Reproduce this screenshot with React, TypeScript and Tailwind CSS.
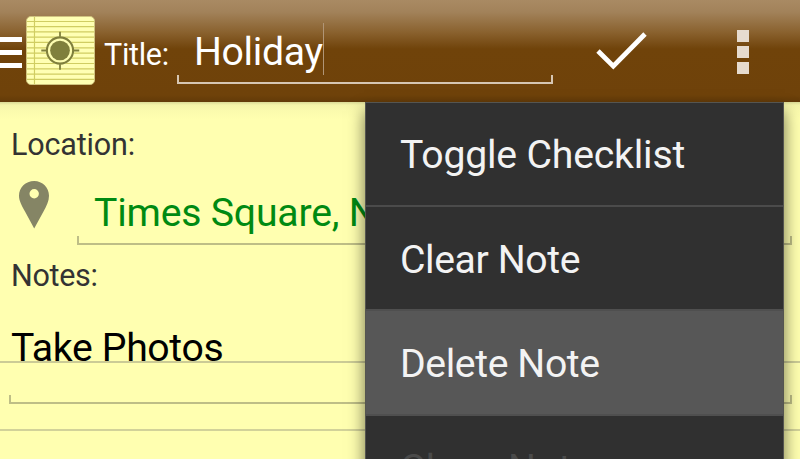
import type { ReactNode } from 'react';

function Field({ className, light, children }: { className: string; light?: boolean; children?: ReactNode }) {
  const line = light ? 'bg-[#d6c6b3]' : 'bg-[#bebe86]';
  return (
    <div className={`flex flex-col justify-end ${className}`}>
      {children}
      <div className="flex shrink-0 justify-between">
        <div className={`h-[7px] w-[2px] ${line}`} />
        <div className={`h-[7px] w-[2px] ${line}`} />
      </div>
      <div className={`h-[2px] shrink-0 ${line}`} />
    </div>
  );
}

function NoteIcon() {
  return (
    <svg className="ml-[4px] h-[69px] w-[69px] shrink-0" viewBox="0 0 70 70">
      <rect x="0.5" y="0.5" width="69" height="69" rx="4.5" fill="#ffffb3" stroke="#cfc37f" />
      <g stroke="#d0cd62" strokeWidth="1.2">
        {[5.6, 10.7, 16.1, 21.4, 26.8, 32.3, 37.6, 42.8, 48.2, 53.6, 59, 64.3].map((y) => (
          <line key={y} x1="1" x2="69" y1={y} y2={y} />
        ))}
        <line x1="8.6" x2="8.6" y1="1" y2="69" />
      </g>
      <circle cx="34.5" cy="35" r="14.4" fill="#fdfdb2" />
      <circle cx="34.5" cy="35" r="13.3" fill="none" stroke="#7f7f3c" strokeWidth="2.1" />
      <circle cx="34.5" cy="35" r="10" fill="#7f7f3c" />
      <path d="M34.500 16v5M34.500 49v5.500M15.500 35h5M48.500 35h5.500" stroke="#7f7f3c" strokeWidth="1.8" />
    </svg>
  );
}

const items = [
  { label: 'Toggle Checklist', row: 'h-[104px] border-b-2 border-[#4b4b4b] pt-[2px]', text: 'text-[#f3f3f3] tracking-[-0.2px]' },
  { label: 'Clear Note', row: 'h-[102px] pt-[4px]', text: 'text-[#f3f3f3] tracking-[-0.4px]' },
  { label: 'Delete Note', row: 'h-[107px] border-y-2 border-[#4f4f4f] bg-[#575757] pt-[2px]', text: 'text-[#f3f3f3] tracking-[-0.4px]' },
  { label: 'Close Note', row: 'h-[105px]', text: 'text-[#4a4a4a]' },
];

export default function App() {
  return (
    <div className="relative flex h-[459px] w-[800px] flex-col overflow-hidden bg-[#ffffb0] font-['Roboto',sans-serif]">
      <header className="flex h-[102px] shrink-0 items-start bg-[linear-gradient(to_bottom,#a98a63_0px,#a2825a_12px,#8a622f_32px,#70430a_49px,#6f420a_95px,#623a08_102px)] text-white">
        <div className="mt-[37px] flex w-[22px] shrink-0 flex-col gap-[8px]">
          <div className="h-[5px] bg-white" />
          <div className="h-[5px] bg-white" />
          <div className="h-[5px] bg-white" />
        </div>
        <div className="pt-[16px]"><NoteIcon /></div>
        <div className="mt-[34px] ml-[9px] w-[73px] shrink-0 text-[30.5px] leading-[42px] tracking-[-0.3px] whitespace-nowrap">Title:</div>
        <Field light className="h-[84px] w-[376px] shrink-0">
          <div className="flex h-[52px] items-start">
            <span className="pl-[17px] text-[39.2px] leading-[58px] tracking-[-0.35px] whitespace-nowrap">Holiday</span>
            <span className="h-[52px] w-px bg-[#b09576]" />
          </div>
        </Field>
        <svg className="mt-[30px] ml-[42px] h-[42px] w-[54px] shrink-0" viewBox="0 0 54 42">
          <path d="M3 21L18.300 36.200L50 4" fill="none" stroke="#fff" strokeWidth="4.8" />
        </svg>
        <div className="mt-[30px] ml-[88px] flex w-[12px] flex-col gap-[4px]">
          <div className="h-[12px] bg-[#e6dbcf]" />
          <div className="h-[12px] bg-[#e6dbcf]" />
          <div className="h-[12px] bg-[#e6dbcf]" />
        </div>
      </header>

      <main className="flex flex-1 flex-col bg-[linear-gradient(to_bottom,#d9d996_0px,#f5f5a9_3px,#fafaad_8px,#ffffb0_18px)] text-[#333]">
        <div className="mt-[23px] h-[40px] pl-[11px] text-[30.5px] leading-[40px] tracking-[-0.15px]">Location:</div>
        <div className="flex h-[80px] shrink-0">
          <svg className="mt-[15px] ml-[18px] h-[50px] w-[32px] shrink-0" viewBox="0 0 32 50">
            <path fillRule="evenodd" fill="#858565" d="M16.200 1C24.500 1 31 7.500 31 15.800C31 21 28.500 26 25.500 31.500L16.200 48.500L7 31.500C4 26 1 21 1 15.800C1 7.500 7.500 1 16.200 1ZM16.200 9a4.700 4.700 0 1 0 0 9.400a4.700 4.700 0 1 0 0-9.400Z" />
          </svg>
          <Field className="ml-[27px] h-[80px] w-[715px] shrink-0">
            <div className="h-[54px] pl-[17px] text-[39.2px] leading-[62px] tracking-[-0.2px] whitespace-nowrap text-[#008a12]">Times Square, New York</div>
          </Field>
        </div>
        <div className="mt-[11px] h-[40px] shrink-0 pl-[11px] text-[30.5px] leading-[40px] tracking-[-0.3px]">Notes:</div>
        <div className="mt-[24px] h-[43px] shrink-0 border-b-2 border-[#cbcb96] pl-[11px] text-[39.2px] leading-[57px] tracking-[-0.35px] text-black">Take Photos</div>
        <Field className="ml-[9px] h-[41px] w-[783px] shrink-0" />
        <div className="mt-[25px] h-[2px] shrink-0 bg-[#d2d299]" />
      </main>

      <nav className="absolute top-[102px] left-[365px] w-[419px] border border-[#555550] bg-[#303030] shadow-[0_10px_15px_1px_rgba(0,0,0,0.5)]">
        {items.map((item) => (
          <div key={item.label} className={`flex items-center pl-[34px] text-[39.2px] leading-[46px] ${item.row} ${item.text}`}>
            {item.label}
          </div>
        ))}
      </nav>
    </div>
  );
}
